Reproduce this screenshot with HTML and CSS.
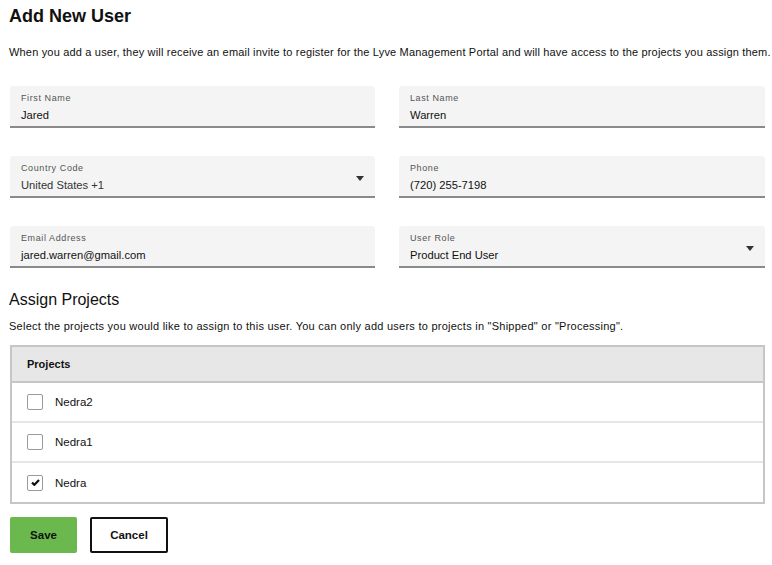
FILE: index.html
```html
<!DOCTYPE html>
<html>
<head>
<meta charset="utf-8">
<link rel="stylesheet" href="styles.css">
</head>
<body>
<div class="page">
  <h1 class="title">Add New User</h1>
  <p class="intro">When you add a user, they will receive an email invite to register for the Lyve Management Portal and will have access to the projects you assign them.</p>
  <div class="fields">
    <div class="field"><div class="label">First Name</div><div class="value">Jared</div></div>
    <div class="field"><div class="label">Last Name</div><div class="value">Warren</div></div>
    <div class="field select"><div class="label">Country Code</div><div class="value muted">United States +1</div><span class="arrow"></span></div>
    <div class="field"><div class="label">Phone</div><div class="value">(720) 255-7198</div></div>
    <div class="field"><div class="label">Email Address</div><div class="value">jared.warren@gmail.com</div></div>
    <div class="field select"><div class="label">User Role</div><div class="value">Product End User</div><span class="arrow"></span></div>
  </div>
  <h2 class="subtitle">Assign Projects</h2>
  <p class="note">Select the projects you would like to assign to this user. You can only add users to projects in "Shipped" or "Processing".</p>
  <div class="table">
    <div class="thead">Projects</div>
    <div class="row"><span class="check"></span><span>Nedra2</span></div>
    <div class="row"><span class="check"></span><span>Nedra1</span></div>
    <div class="row last"><span class="check checked"><svg width="9" height="7" viewBox="0 0 9 7"><path d="M1 3.6 L3.4 5.8 L8 1" fill="none" stroke="#111" stroke-width="2.2"/></svg></span><span>Nedra</span></div>
  </div>
  <div class="actions">
    <button class="btn save">Save</button>
    <button class="btn cancel">Cancel</button>
  </div>
</div>
</body>
</html>
```
FILE: styles.css
```css
* { box-sizing: border-box; }
html, body { margin: 0; padding: 0; background: #fff; }
body { font-family: "Liberation Sans", Arial, sans-serif; color: #111; }
.page { padding: 5px 7px 0 10px; }
.title { margin: 0 0 0 -1px; font-size: 18px; font-weight: bold; line-height: 22px; }
.intro { margin: 18px 0 0 -1px; font-size: 11px; letter-spacing: 0.18px; line-height: 14px; white-space: nowrap; }
.fields { display: grid; grid-template-columns: 365px 366px; column-gap: 24px; row-gap: 28px; margin-top: 27px; }
.field { position: relative; height: 42px; background: #f4f4f4; border-bottom: 2px solid #8a8a8a; border-radius: 3px 3px 0 0; padding: 7px 11px 0; }
.label { font-size: 9px; line-height: 11px; letter-spacing: 0.6px; color: #555; }
.value { font-size: 11.2px; line-height: 15px; margin-top: 4px; color: #111; }
.value.muted { color: #333; }
.arrow { position: absolute; right: 11px; top: 20px; width: 0; height: 0; border-left: 4.5px solid transparent; border-right: 4.5px solid transparent; border-top: 5px solid #333; }
.subtitle { margin: 22px 0 0 -1px; font-size: 16px; font-weight: normal; line-height: 20px; }
.note { margin: 9px 0 0 -1px; font-size: 11px; letter-spacing: 0.25px; line-height: 14px; white-space: nowrap; }
.table { margin-top: 12px; width: 755px; border: 2px solid #c6c6c6; }
.thead { height: 36px; background: #e7e7e7; border-bottom: 2px solid #c6c6c6; font-size: 11px; font-weight: bold; padding-left: 15px; display: flex; align-items: center; }
.row { height: 40px; display: flex; align-items: center; padding-left: 15px; gap: 12px; font-size: 11.5px; border-bottom: 2px solid #e6e6ea; }
.row.last { border-bottom: none; height: 39px; }
.check { width: 16px; height: 16px; border: 1px solid #9a9a9a; border-radius: 2px; background: #fff; display: flex; align-items: center; justify-content: center; }
.actions { display: flex; gap: 13px; margin-top: 13px; }
.btn { height: 36px; font-family: "Liberation Sans", Arial, sans-serif; font-size: 11.5px; font-weight: bold; color: #111; border-radius: 2px; cursor: pointer; }
.save { width: 67px; background: #6bb94e; border: none; }
.cancel { width: 78px; background: #fff; border: 2px solid #111; }
```
